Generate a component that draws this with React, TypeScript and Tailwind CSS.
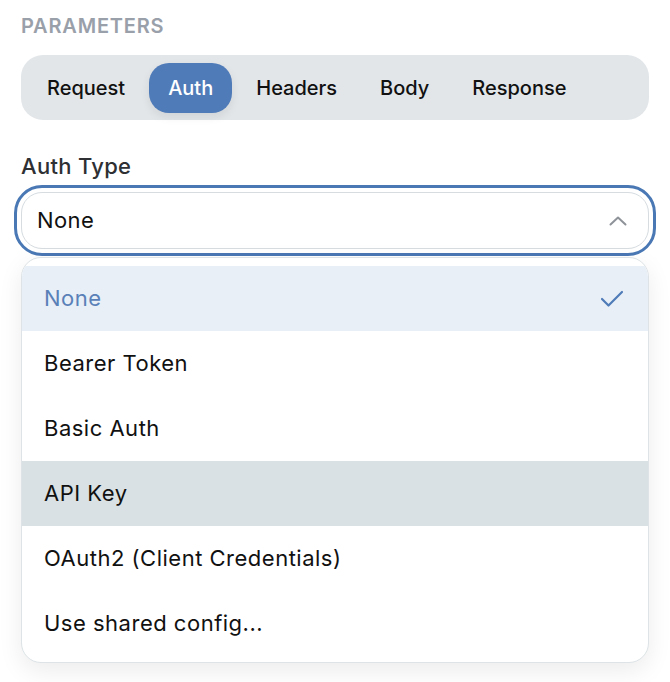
import React from "react";

const items = [
  "None",
  "Bearer Token",
  "Basic Auth",
  "API Key",
  "OAuth2 (Client Credentials)",
  "Use shared config...",
];

export default function App() {
  const tabs = ["Request", "Auth", "Headers", "Body", "Response"];
  return (
    <div
      className="w-[670px] h-[682px] bg-white px-[21px] pt-[14px]"
      style={{ fontFamily: "Inter, 'Noto Sans', sans-serif" }}
    >
      <div className="text-[20px] font-semibold tracking-[0.8px] text-[#9aa0a9] leading-[24px]">
        PARAMETERS
      </div>
      <div className="mt-[17px] h-[65px] rounded-[22px] bg-[#e2e6e9] flex items-center px-[7px] gap-[5px]">
        {tabs.map((t) => (
          <div
            key={t}
            className={
              t === "Auth"
                ? "h-[50px] px-[19px] rounded-[20px] bg-[#4f7bb8] text-white flex items-center text-[20px] font-medium shadow-[0_4px_10px_rgba(0,0,0,0.08)]"
                : "h-[50px] px-[19px] rounded-[20px] text-[#111] flex items-center text-[20px] font-medium"
            }
          >
            {t}
          </div>
        ))}
      </div>
      <div className="mt-[32px] text-[22px] font-medium tracking-[0.3px] text-[#2e3033] leading-[28px]">
        Auth Type
      </div>
      <div className="mt-[5px] -mx-[7px] rounded-[28px] border-[3px] border-[#4a78b5] p-[4px]">
        <div className="h-[57px] rounded-[21px] border border-[#d6dce0] flex items-center justify-between pl-[15px] pr-[21px] bg-white">
          <span className="text-[22px] tracking-[0.4px] text-[#111]">None</span>
          <svg width="18" height="10" viewBox="0 0 18 10" fill="none">
            <path d="M1.5 8.5L9 1.5L16.5 8.5" stroke="#8e9399" strokeWidth="2" strokeLinecap="round" strokeLinejoin="round" />
          </svg>
        </div>
      </div>
      <div className="mt-[1px] rounded-[20px] border border-[#dde3e6] bg-white pt-[8px] pb-[6px] overflow-hidden shadow-[0_8px_24px_rgba(0,0,0,0.08)]">
        {items.map((it, i) => (
          <div
            key={it}
            className={
              "h-[65px] flex items-center justify-between pl-[22px] pr-[24px] text-[22px] tracking-[0.5px] " +
              (i === 0
                ? "bg-[#e8eff7] text-[#5a80b8]"
                : i === 3
                ? "bg-[#dae1e4] text-[#111]"
                : "text-[#111]")
            }
          >
            <span>{it}</span>
            {i === 0 && (
              <svg width="24" height="18" viewBox="0 0 24 18" fill="none">
                <path d="M2 9L8.5 15.5L22 2" stroke="#4f7bb8" strokeWidth="2.2" strokeLinecap="round" strokeLinejoin="round" />
              </svg>
            )}
          </div>
        ))}
      </div>
    </div>
  );
}
